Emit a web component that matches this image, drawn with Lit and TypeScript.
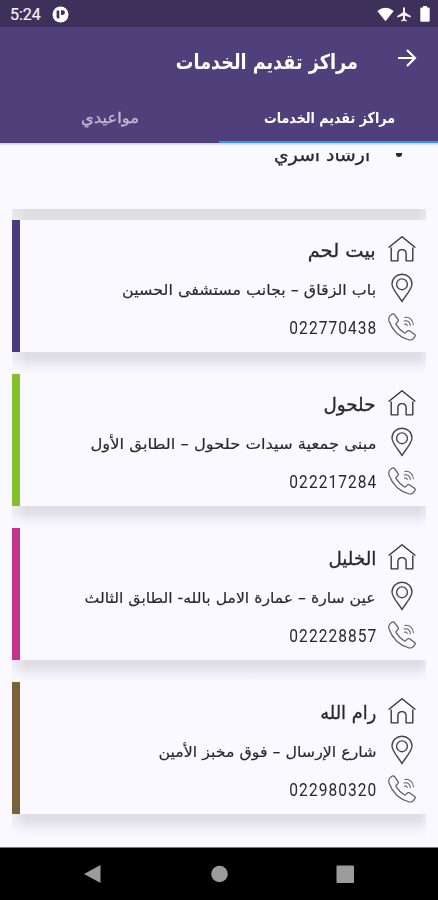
import { LitElement, html, css, svg } from "lit";
import { customElement, property } from "lit/decorators.js";

/** One line of text, condensed or stretched to a given width, anchored on its start edge. */
@customElement("fit-text")
class FitText extends LitElement {
  @property({ type: Number }) width = 0;
  @property() text = "";
  static styles = css`
    :host { display: block; flex: none; }
    span { display: inline-block; white-space: nowrap; transform-origin: 100% 50%; float: right; }
  `;
  render() {
    return html`<span>${this.text}</span>`;
  }
  updated() {
    const s = this.renderRoot.querySelector("span") as HTMLElement;
    s.style.transform = "none";
    const w = s.getBoundingClientRect().width;
    if (w) s.style.transform = `scaleX(${this.width / w})`;
    this.style.width = `${this.width}px`;
    s.style.marginLeft = `${Math.min(0, this.width - w)}px`;
  }
}

interface Center {
  name: string; nameW: number; address: string; addressW: number; phone: string; color: string;
}

const CENTERS: Center[] = [
  { name: "بيت لحم", nameW: 68, address: "باب الزقاق – بجانب مستشفى الحسين", addressW: 254, phone: "022770438", color: "#4b3d7c" },
  { name: "حلحول", nameW: 52, address: "مبنى جمعية سيدات حلحول – الطابق الأول", addressW: 286, phone: "022217284", color: "#82c02d" },
  { name: "الخليل", nameW: 48, address: "عين سارة – عمارة الامل بالله- الطابق الثالث", addressW: 291, phone: "022228857", color: "#c5338f" },
  { name: "رام الله", nameW: 56, address: "شارع الإرسال – فوق مخبز الأمين", addressW: 218, phone: "022980320", color: "#7b6039" },
];

const house = svg`<svg width="30" height="30" viewBox="0 0 30 30" fill="none" stroke="#333238" stroke-width="1.35" stroke-linejoin="round" stroke-linecap="round">
  <path d="M2 13.200 15 2.800 28 13.200"/><path d="M4.200 14V26.800H10.900V19.800Q10.900 15.600 15 15.600T19.100 19.800V26.800H25.800V14"/></svg>`;
const pin = svg`<svg width="30" height="30" viewBox="0 0 30 30" fill="none" stroke="#45444a" stroke-width="1.35" stroke-linejoin="round">
  <path d="M15 28.600C12.200 23.200 5 16.500 5 11A10 9.800 0 0 1 25 11C25 16.500 17.800 23.200 15 28.600Z"/><circle cx="15" cy="11.300" r="5.400"/></svg>`;
const phone = svg`<svg width="28" height="28" viewBox="0 0 30 30" fill="none" stroke="#5c5b61" stroke-width="1.3" stroke-linejoin="round" stroke-linecap="round">
  <path d="M2.300 2.800 4.600 1.100Q6 .4 7 1.700L10.700 6.900Q11.600 8.300 10.400 9.500L8.800 10.900Q8.200 11.700 8.900 12.800Q12.200 18 17.300 21.200Q18.300 21.900 19.100 21L20.500 19.400Q21.600 18.300 23 19.100L28.300 22.700Q29.700 23.700 28.900 25L27.200 27.500Q25.400 29.500 22.200 28.700Q6.800 24.200 1.100 8.500Q.2 4.900 2.300 2.800Z"/>
  <path d="M18 4.800C22.500 3.600 27 7.300 27.200 12.600M17.300 8.600C21 7.400 23.700 9.800 23.900 13.600M17.600 12Q19.800 11 20.600 13.400" stroke-width="1.1"/></svg>`;

@customElement("center-card")
class CenterCard extends LitElement {
  @property({ attribute: false }) center!: Center;
  static styles = css`
    :host { display: block; }
    .card {
      box-sizing: border-box; height: 132px; padding: 10px 9px 0 0;
      background: #faf9ff; border-left: 8px solid;
      display: grid; grid-template-columns: 1fr 30px; grid-template-rows: 37px 41px 38px;
      column-gap: 11px; align-items: center; justify-items: end; direction: ltr;
    }
    .shade { height: 22px; background: linear-gradient(#dddce1 0, #e1e0e6 30%, #f0eff6 65%, #f9f8fe 100%);
      -webkit-mask-image: linear-gradient(90deg, #0006, #000 14px, #000 calc(100% - 8px), #0009); }
    svg { display: block; justify-self: center; }
    fit-text { direction: rtl; color: #29282d; font-family: "DejaVu Sans", sans-serif; }
    .name { font-size: 18.500px; line-height: 28px; -webkit-text-stroke: .3px #29282d; padding-top: 4px; }
    .address { font-size: 15px; line-height: 26px; padding-top: 4px; -webkit-text-stroke: .15px #29282d; }
    .phone { font: 17.500px/26px Roboto, sans-serif; letter-spacing: 1.200px; padding-top: 2px; margin-right: -1px; }
  `;
  render() {
    const c = this.center;
    return html`
      <div class="card" style="border-color:${c.color}">
        <fit-text class="name" .text=${c.name} .width=${c.nameW}></fit-text>${house}
        <fit-text class="address" .text=${c.address} .width=${c.addressW}></fit-text>${pin}
        <fit-text class="phone" .text=${c.phone} .width=${88}></fit-text>${phone}
      </div>
      <div class="shade"></div>`;
  }
}

@customElement("app-root")
class AppRoot extends LitElement {
  static styles = css`
    :host { display: flex; flex-direction: column; width: 438px; height: 900px; overflow: hidden; background: #faf9ff; font-family: "DejaVu Sans", sans-serif; }
    svg { display: block; }
    .status { height: 27px; background: #3d315c; display: flex; align-items: center; padding: 1px 8px 0 10px; box-sizing: border-box; color: #f4f2f8; flex: none; }
    .time { font: 400 16px/26px Roboto, sans-serif; -webkit-text-stroke: .2px #f4f2f8; padding-top: 1px; }
    .badge { margin-left: 11px; }
    .spacer { flex: 1; }
    .wifi { margin-right: 3px; }
    .plane { margin-right: 9px; }
    header { height: 116px; background: #4f407c; flex: none; display: flex; flex-direction: column; }
    .bar { height: 68px; display: flex; justify-content: flex-end; align-items: center; padding-right: 20px; gap: 38px; color: #fff; }
    .title { font-weight: 700; font-size: 20.500px; line-height: 34px; direction: rtl; padding-top: 1px; }
    .arrow { margin-bottom: 6px; }
    .tabs { flex: 1; display: grid; grid-template-columns: 219px 219px; }
    .tab { display: flex; justify-content: center; align-items: center; direction: rtl; font-size: 15px; line-height: 24px; box-sizing: border-box; color: #c2b9d4; border-bottom: 2px solid #4f407c; padding: 0 0 1px 2px; -webkit-text-stroke: .3px #c2b9d4; }
    .on { color: #fff; font-weight: 700; -webkit-text-stroke: 0; border-bottom-color: #3097e5; }
    .edge { height: 3px; flex: none; background: linear-gradient(#cecbe0, #faf9ff); }
    .list { flex: 1; margin-top: 7px; overflow: hidden; padding: 0 12px; }
    .last { height: 56px; display: flex; justify-content: flex-end; gap: 26px; direction: ltr; color: #29282d; padding-right: 24px; }
    .last fit-text { font-size: 18px; line-height: 28px; direction: rtl; margin-top: -12px; -webkit-text-stroke: .3px #29282d; }
    .dot { width: 6px; height: 4px; background: #29282d; border-radius: 0 0 4px 4px; }
    .band { height: 11px; background: linear-gradient(#dddce1, #e2e1e6); -webkit-mask-image: linear-gradient(90deg, #0009, #000 12px, #000 calc(100% - 8px), #000a); }
    nav { height: 53px; background: #000; border-top: 1px solid #77767b; box-sizing: border-box; flex: none; display: flex; justify-content: center; }
  `;
  render() {
    return html`
      <div class="status">
        <span class="time">5:24</span>
        <svg class="badge" width="17" height="17" viewBox="0 0 17 17"><circle cx="8.500" cy="8.500" r="8" fill="#fff"/><path d="M4.600 4.500H7.300V12.600H6.300Q4.600 12.600 4.600 10.900Z" fill="#3d315c"/><path d="M9 4.300H10.600A2.300 2.300 0 0 1 10.600 8.900H9Z" fill="#3d315c"/></svg>
        <span class="spacer"></span>
        <svg class="wifi" width="17" height="15" viewBox="0 0 17 15"><path d="M.3 4Q8.500-2.300 16.700 4L8.500 14.300Z" fill="#fff"/></svg>
        <svg class="plane" width="14" height="15" viewBox="0 0 14 15"><path d="M6 1.300a1 1 0 0 1 2 0V5.200L13.800 9V10.500L8 8.700V12L9.800 13.400V14.600L7 13.800 4.200 14.600V13.400L6 12V8.700L.2 10.500V9L6 5.200Z" fill="#f4f2f8"/></svg>
        <svg width="10" height="16" viewBox="0 0 10 16"><path d="M3 0H7V1.500H8.500Q9.700 1.500 9.700 2.700V14.500Q9.700 15.700 8.500 15.700H1.500Q.3 15.700 .3 14.500V2.700Q.3 1.500 1.500 1.500H3Z" fill="#fff"/></svg>
      </div>
      <header>
        <div class="bar">
          <fit-text class="title" .text=${"مراكز تقديم الخدمات"} .width=${182}></fit-text>
          <svg class="arrow" width="22" height="22" viewBox="0 0 22 22" fill="none" stroke="#fff" stroke-width="2.200"><path d="M2 11H18.600M11 3 19 11 11 19"/></svg>
        </div>
        <div class="tabs">
          <div class="tab"><fit-text .text=${"مواعيدي"} .width=${58}></fit-text></div>
          <div class="tab on"><fit-text .text=${"مراكز تقديم الخدمات"} .width=${131}></fit-text></div>
        </div>
      </header>
      <div class="edge"></div>
      <main class="list">
        <div class="last"><fit-text .text=${"ارشاد اسري"} .width=${96}></fit-text><span class="dot"></span></div>
        <div class="band"></div>
        ${CENTERS.map((c) => html`<center-card .center=${c}></center-card>`)}
      </main>
      <nav>
        <svg width="438" height="52" viewBox="0 0 438 52" fill="#9b9b9b"><path d="M84 26 100.500 17V35Z"/><circle cx="219.500" cy="26" r="8.300"/><rect x="336.500" y="17.500" width="17.500" height="17.500" rx="1"/></svg>
      </nav>`;
  }
}
